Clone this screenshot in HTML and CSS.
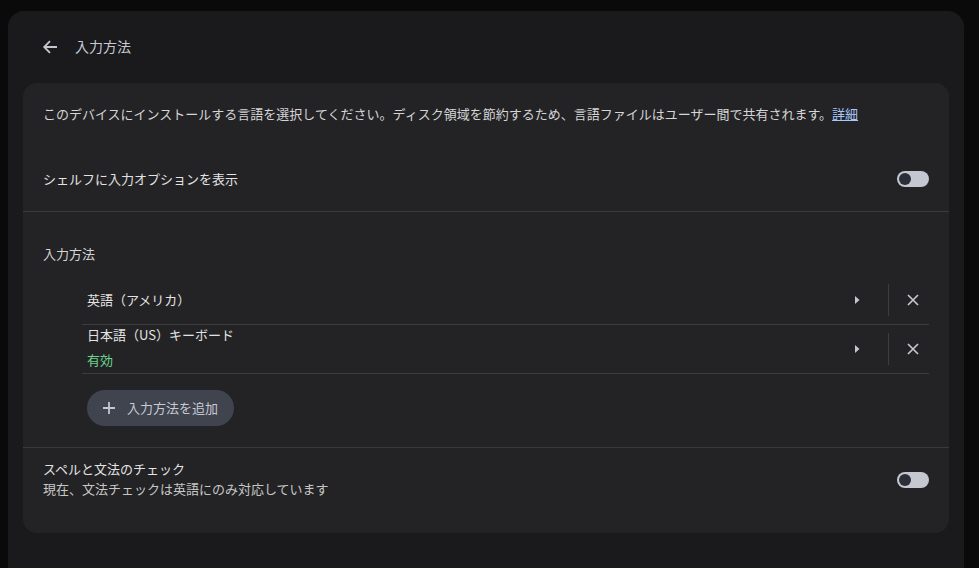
FILE: index.html
```html
<!DOCTYPE html>
<html lang="ja">
<head>
<meta charset="utf-8">
<title>入力方法</title>
<link rel="stylesheet" href="styles.css">
</head>
<body>
<div class="panel">
  <header class="header">
    <svg class="back" width="16" height="16" viewBox="0 0 16 16"><path d="M15 8H2.5M8 2.2L2.2 8 8 13.8" fill="none" stroke="#c4c7d0" stroke-width="1.8"/></svg>
    <h1 class="title">入力方法</h1>
  </header>
  <main class="card">
    <p class="desc">このデバイスにインストールする言語を選択してください。ディスク領域を節約するため、言語ファイルはユーザー間で共有されます。<a class="link" href="#">詳細</a></p>
    <div class="row">
      <span class="label">シェルフに入力オプションを表示</span>
      <span class="toggle"><span class="knob"></span></span>
    </div>
    <section class="methods">
      <div class="subhead">入力方法</div>
      <div class="list">
        <div class="item">
          <div class="item-text"><div class="item-name">英語（アメリカ）</div></div>
          <svg class="caret" width="8" height="10" viewBox="0 0 8 10"><path d="M2 1L6.5 5 2 9Z" fill="#c4c7d0"/></svg>
          <span class="vdiv"></span>
          <svg class="close" width="12" height="12" viewBox="0 0 12 12"><path d="M1 1L11 11M11 1L1 11" stroke="#c4c7d0" stroke-width="1.7"/></svg>
        </div>
        <div class="item">
          <div class="item-text"><div class="item-name">日本語（US）キーボード</div><div class="item-status">有効</div></div>
          <svg class="caret" width="8" height="10" viewBox="0 0 8 10"><path d="M2 1L6.5 5 2 9Z" fill="#c4c7d0"/></svg>
          <span class="vdiv"></span>
          <svg class="close" width="12" height="12" viewBox="0 0 12 12"><path d="M1 1L11 11M11 1L1 11" stroke="#c4c7d0" stroke-width="1.7"/></svg>
        </div>
      </div>
      <button class="add"><svg width="14" height="14" viewBox="0 0 14 14"><path d="M7 1V13M1 7H13" stroke="#c4c7d0" stroke-width="1.8"/></svg><span>入力方法を追加</span></button>
    </section>
    <div class="row spell">
      <div>
        <div class="label">スペルと文法のチェック</div>
        <div class="sub">現在、文法チェックは英語にのみ対応しています</div>
      </div>
      <span class="toggle"><span class="knob"></span></span>
    </div>
  </main>
</div>
</body>
</html>
```
FILE: styles.css
```css
html, body {
  margin: 0;
  padding: 0;
  background: #0a0a0a;
  height: 100%;
  overflow: hidden;
}
body {
  font-family: "Noto Sans CJK JP", "Noto Sans", Roboto, sans-serif;
  color: #e3e3e3;
  font-size: 13px;
}
.panel {
  margin: 11px 15px 0 8px;
  background: #1a1a1c;
  border-radius: 16px 16px 0 0;
  height: 557px;
  padding: 0 15px;
  box-sizing: border-box;
}
.header {
  height: 72px;
  display: flex;
  align-items: center;
  padding-left: 19px;
}
.back { margin-right: 17px; margin-top: -1px; }
.title {
  margin: -2px 0 0;
  font-size: 14px;
  font-weight: 400;
  color: #c7cad3;
}
.card {
  background: #232325;
  border-radius: 14px;
  padding: 0 20px 21px;
}
.desc {
  margin: 0;
  padding: 22px 0 0;
  line-height: 18px;
  height: 42px;
  color: #d5d5d7;
}
.link { color: #a8c7fa; text-decoration: underline; }
.row {
  display: flex;
  align-items: center;
  justify-content: space-between;
  height: 64px;
}
.row > .label { margin-top: -2px; }
.label { color: #e3e3e3; }
.toggle {
  width: 32px;
  height: 16px;
  background: #c4c7d0;
  border-radius: 8px;
  display: flex;
  align-items: center;
  padding-left: 2px;
  box-sizing: border-box;
}
.knob {
  width: 12px;
  height: 12px;
  border-radius: 50%;
  background: #2b2f39;
}
.methods {
  border-top: 1px solid #3a3a3c;
  border-bottom: 1px solid #3a3a3c;
  margin: 0 -20px;
  padding: 20px 20px 21px;
}
.subhead { line-height: 44px; height: 44px; color: #d5d5d7; }
.list { margin-left: 39px; }
.item {
  display: flex;
  align-items: center;
  height: 48px;
  border-bottom: 1px solid #3d3d40;
  padding-left: 5px;
}
.item-text { flex: 1; }
.item-name { line-height: 18px; }
.item:first-child .item-name { margin-top: -1px; }
.item-status { color: #6dd58c; line-height: 18px; margin-top: 7px; }
.item:nth-child(2) .item-name { margin-top: -4px; }
.caret { margin-right: 27px; }
.vdiv { width: 1px; height: 32px; background: #3d3d40; margin-right: 18px; }
.close { margin-right: 10px; }
.add {
  margin: 16px 0 0 44px;
  height: 36px;
  border: none;
  border-radius: 18px;
  background: #40444f;
  color: #c7cad3;
  font-family: inherit;
  font-size: 13px;
  display: flex;
  align-items: center;
  padding: 0 16px 0 15px;
}
.add svg { margin-right: 11px; }
.add span { margin-top: -1px; }
.spell { height: 64px; }
.spell > div { margin-top: -2px; }
.sub { color: #c7c7c7; margin-top: 2px; line-height: 18px; }
.spell .label { line-height: 18px; }
```
